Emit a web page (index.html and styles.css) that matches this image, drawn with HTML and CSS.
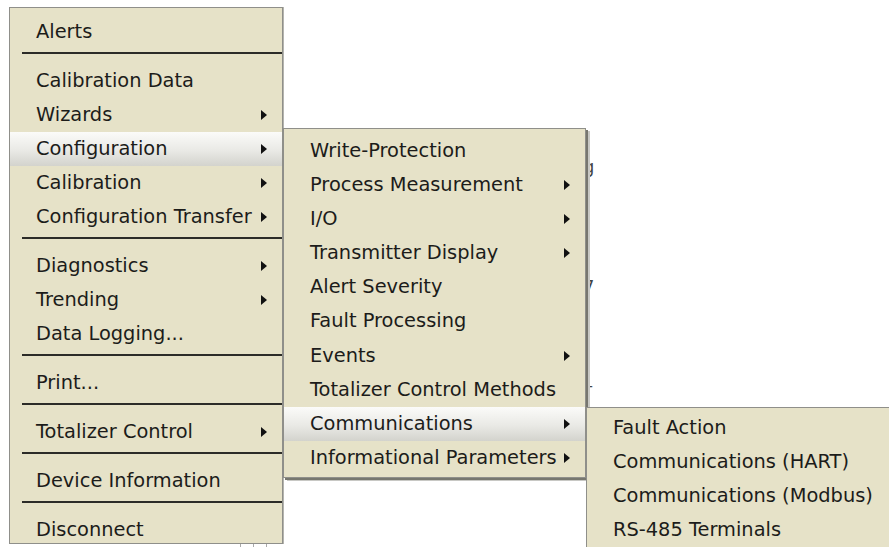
FILE: index.html
```html
<!DOCTYPE html>
<html lang="en">
<head>
  <meta charset="UTF-8" />
  <title>Device Menu</title>
  <link rel="stylesheet" href="styles.css">
</head>
<body>

  <div class="desk">

    <!-- window partly hidden behind the popups -->
    <div class="behind">
      <div class="frag">.g</div>
      <div class="frag">.</div>
      <div class="frag">/</div>
      <div class="frag">.</div>
      <div class="frag">.7</div>
      <div class="frag">.</div>
      <div class="frag">.:</div>
      <div class="frag">._</div>
      <div class="frag">.</div>
    </div>
    <div class="ticks"><span></span><span></span><span></span></div>

    <ul class="menu menu-main">
      <li class="item">Alerts</li>
      <li class="sep"></li>
      <li class="item">Calibration Data</li>
      <li class="item sub">Wizards</li>
      <li class="item sub active">Configuration</li>
      <li class="item sub">Calibration</li>
      <li class="item sub">Configuration Transfer</li>
      <li class="sep"></li>
      <li class="item sub">Diagnostics</li>
      <li class="item sub">Trending</li>
      <li class="item">Data Logging...</li>
      <li class="sep"></li>
      <li class="item">Print...</li>
      <li class="sep"></li>
      <li class="item sub">Totalizer Control</li>
      <li class="sep"></li>
      <li class="item">Device Information</li>
      <li class="sep"></li>
      <li class="item">Disconnect</li>
    </ul>

    <ul class="menu menu-config">
      <li class="item">Write-Protection</li>
      <li class="item sub">Process Measurement</li>
      <li class="item sub">I/O</li>
      <li class="item sub">Transmitter Display</li>
      <li class="item">Alert Severity</li>
      <li class="item">Fault Processing</li>
      <li class="item sub">Events</li>
      <li class="item">Totalizer Control Methods</li>
      <li class="item sub active">Communications</li>
      <li class="item sub">Informational Parameters</li>
    </ul>

    <ul class="menu menu-comm">
      <li class="item">Fault Action</li>
      <li class="item">Communications (HART)</li>
      <li class="item">Communications (Modbus)</li>
      <li class="item">RS-485 Terminals</li>
    </ul>

  </div>

</body>
</html>
```

FILE: styles.css
```css
body {
  margin: 0;
  background: #fff;
  font-family: "DejaVu Sans", Verdana, sans-serif;
  font-size: 19.4px;
  color: #1c1c1a;
}
.desk {
  position: relative;
  width: 889px;
  height: 547px;
  overflow: hidden;
}
.behind {
  position: absolute;
  left: 578px;
  top: 150px;
  width: 18px;
  font-size: 17px;
  line-height: 34px;
  color: #444;
  overflow: hidden;
}
.frag {
  height: 30px;
  white-space: nowrap;
}
.ticks {
  position: absolute;
  left: 240px;
  top: 544px;
  display: flex;
  gap: 12px;
}
.ticks span {
  width: 1px;
  height: 3px;
  background: #aaa;
}
.menu {
  position: absolute;
  box-sizing: border-box;
  margin: 0;
  list-style: none;
  background: #e6e2c8;
  border: 1px solid #8f8f8a;
}
.menu-main {
  left: 9px;
  top: 7px;
  width: 274px;
  height: 537px;
  padding: 7px 0 0;
  overflow: hidden;
  box-shadow: 1px 0 0 #b4b4ae;
}
.menu-config {
  left: 283px;
  top: 128px;
  width: 303px;
  padding: 5px 0 2px;
  box-shadow: 2px 2px 0 #77776f, 4px 3px 0 #c8c8c4;
}
.menu-comm {
  left: 586px;
  top: 407px;
  width: 322px;
  padding: 3px 0 0;
}
.item {
  position: relative;
  height: 34px;
  line-height: 34px;
  padding-left: 26px;
  white-space: nowrap;
}
.menu-config .item,
.menu-comm .item {
  height: 34.1px;
  line-height: 34.1px;
}
.sub::after {
  content: "";
  position: absolute;
  right: 15px;
  top: 12px;
  border-left: 6px solid #111;
  border-top: 5.5px solid transparent;
  border-bottom: 5.5px solid transparent;
}
.active {
  background: linear-gradient(#fbfbf9, #e9e9e5 55%, #d3d3cd);
}
.sep {
  height: 2px;
  margin: 3px 0 10px 12px;
  background: #2c2c28;
}
```
